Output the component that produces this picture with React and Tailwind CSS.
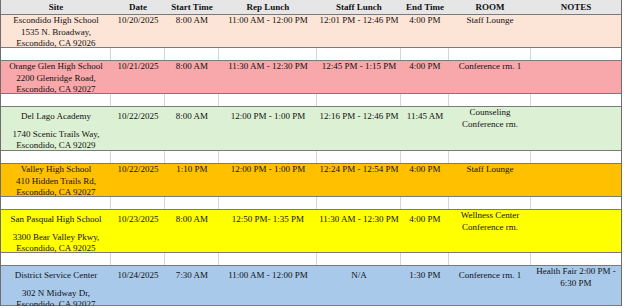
const rows = [
  {
    bg: "bg-[#fce4d6]",
    h: "h-[34px]",
    pad: "pt-0",
    gap: false,
    site: ["Escondido High School", "1535 N. Broadway,", "Escondido, CA 92026"],
    date: "10/20/2025",
    start: "8:00 AM",
    rep: "11:00 AM - 12:00 PM",
    staff: "12:01 PM - 12:46 PM",
    end: "4:00 PM",
    room: ["Staff Lounge"],
    roomTop: false,
    notes: [],
  },
  {
    bg: "bg-[#f8a8aa]",
    h: "h-[34px]",
    pad: "pt-0",
    gap: false,
    site: ["Orange Glen High School", "2200 Glenridge Road,", "Escondido, CA 92027"],
    date: "10/21/2025",
    start: "8:00 AM",
    rep: "11:30 AM - 12:30 PM",
    staff: "12:45 PM - 1:15 PM",
    end: "4:00 PM",
    room: ["Conference rm. 1"],
    roomTop: false,
    notes: [],
  },
  {
    bg: "bg-[#dcf0d4]",
    h: "h-[45px]",
    pad: "pt-[4px]",
    gap: true,
    site: ["Del Lago Academy", "1740 Scenic Trails Way,", "Escondido, CA 92029"],
    date: "10/22/2025",
    start: "8:00 AM",
    rep: "12:00 PM - 1:00 PM",
    staff: "12:16 PM - 12:46 PM",
    end: "11:45 AM",
    room: ["Counseling", "Conference rm."],
    roomTop: true,
    notes: [],
  },
  {
    bg: "bg-[#ffc000]",
    h: "h-[34px]",
    pad: "pt-0",
    gap: false,
    site: ["Valley High School", "410 Hidden Trails Rd,", "Escondido, CA 92027"],
    date: "10/22/2025",
    start: "1:10 PM",
    rep: "12:00 PM - 1:00 PM",
    staff: "12:24 PM - 12:54 PM",
    end: "4:00 PM",
    room: ["Staff Lounge"],
    roomTop: false,
    notes: [],
  },
  {
    bg: "bg-[#ffff00]",
    h: "h-[44px]",
    pad: "pt-[4px]",
    gap: true,
    site: ["San Pasqual High School", "3300 Bear Valley Pkwy,", "Escondido, CA 92025"],
    date: "10/23/2025",
    start: "8:00 AM",
    rep: "12:50 PM- 1:35 PM",
    staff: "11:30 AM - 12:30 PM",
    end: "4:00 PM",
    room: ["Wellness Center", "Conference rm."],
    roomTop: true,
    notes: [],
  },
  {
    bg: "bg-[#a9c9eb]",
    h: "h-[41px]",
    pad: "pt-[4px]",
    gap: true,
    site: ["District Service Center", "302 N Midway Dr,", "Escondido, CA 92027"],
    date: "10/24/2025",
    start: "7:30 AM",
    rep: "11:00 AM - 12:00 PM",
    staff: "N/A",
    end: "1:30 PM",
    room: ["Conference rm. 1"],
    roomTop: false,
    notes: ["Health Fair 2:00 PM -", "6:30 PM"],
    notesTop: true,
  },
];

const headers = ["Site", "Date", "Start Time", "Rep Lunch", "Staff Lunch", "End Time", "ROOM", "NOTES"];

const cols = "grid grid-cols-[110px_54px_54px_98px_84px_48px_82px_90px]";

function Lines({ lines, className }) {
  return (
    <div className={"text-center whitespace-nowrap " + className}>
      {lines.map((l, i) => (
        <div key={i}>{l}</div>
      ))}
    </div>
  );
}

function Spacer() {
  return (
    <div className={cols + " h-[12px] bg-white"}>
      {headers.map((h, i) => (
        <div key={i} className={i < 7 ? "border-r border-[#d6d6d6]" : ""} />
      ))}
    </div>
  );
}

function Row({ r }) {
  return (
    <div className={cols + " border-y border-[#7a7a7a] " + r.h + " " + r.bg}>
      <div className={"text-center whitespace-nowrap " + r.pad}>
        <div className={r.gap ? "mb-[6px]" : ""}>{r.site[0]}</div>
        <div>{r.site[1]}</div>
        <div>{r.site[2]}</div>
      </div>
      <Lines lines={[r.date]} className={r.pad} />
      <Lines lines={[r.start]} className={r.pad} />
      <Lines lines={[r.rep]} className={r.pad} />
      <Lines lines={[r.staff]} className={r.pad} />
      <Lines lines={[r.end]} className={r.pad} />
      <Lines lines={r.room} className={r.roomTop ? "pt-0" : r.pad} />
      <Lines lines={r.notes} className={r.notesTop ? "pt-0" : r.pad} />
    </div>
  );
}

export default function App() {
  return (
    <div className="w-[624px] h-[308px] bg-white overflow-hidden">
      <div
        className="w-[622px] h-[306px] border-x border-[#6e6e6e] overflow-hidden text-[9px] leading-[11.5px] text-[#111]"
        style={{ fontFamily: '"Liberation Serif", "Times New Roman", serif' }}
      >
        <div className={cols + " h-[14px] bg-[#e6e6e6] font-bold leading-[14px]"}>
          {headers.map((h) => (
            <div key={h} className="text-center whitespace-nowrap">
              {h}
            </div>
          ))}
        </div>
        {rows.map((r, i) => (
          <div key={i}>
            <Row r={r} />
            {i < rows.length - 1 && <Spacer />}
          </div>
        ))}
      </div>
    </div>
  );
}
